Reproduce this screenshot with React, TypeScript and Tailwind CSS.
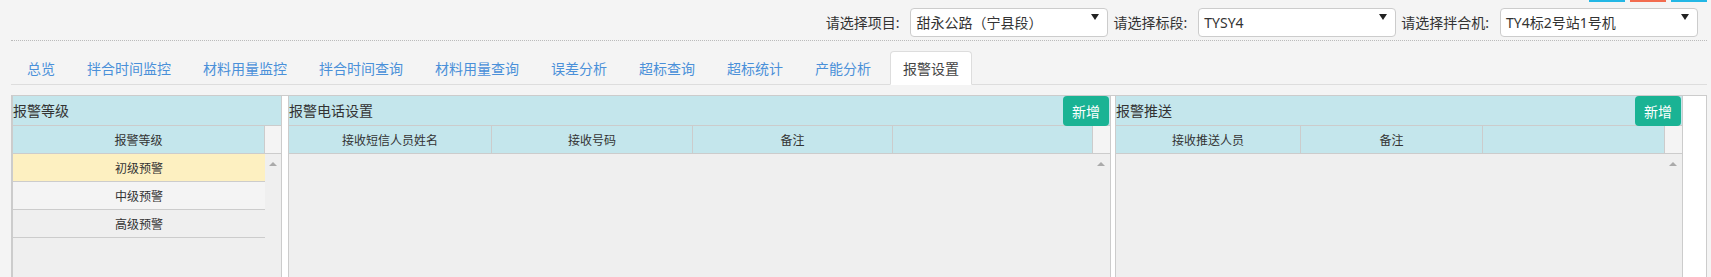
import clsx from "clsx";

const tabs = ["总览", "拌合时间监控", "材料用量监控", "拌合时间查询", "材料用量查询", "误差分析", "超标查询", "超标统计", "产能分析", "报警设置"];

const filters = [
	{ label: "请选择项目:", value: "甜永公路（宁县段）" },
	{ label: "请选择标段:", value: "TYSY4" },
	{ label: "请选择拌合机:", value: "TY4标2号站1号机" },
];

function FakeSelect({ value }: { value: string }) {
	return (
		<div className="relative flex h-[29px] w-[198px] items-center rounded-[4px] border border-[#ccc] bg-white pl-[5px] text-[14px] text-[#333]">
			{value}
			<span className="absolute right-[8px] top-[5px] h-0 w-0 border-x-[4px] border-t-[6px] border-x-transparent border-t-[#222]" />
		</div>
	);
}

function ScrollUp() {
	return <span className="mt-[8px] h-0 w-0 border-x-[4px] border-b-[4px] border-x-transparent border-b-[#aaa]" />;
}

type Column = { title: string; width: string };

function Panel({
	title,
	columns,
	className,
	withAdd,
	rows,
}: {
	title: string;
	columns: Column[];
	className: string;
	withAdd?: boolean;
	rows?: string[];
}) {
	return (
		<div className={clsx("flex flex-col border-x border-b border-[#ccc] bg-[#efefef]", className)}>
			<div className="flex h-[30px] items-center justify-between border-b border-[#ccc] bg-[#c4e6ec] text-[14px] text-[#333]">
				<span className="leading-none">{title}</span>
				{withAdd ? (
					<button className="mr-[1px] h-[30px] w-[46px] self-start rounded-[4px] bg-[#1ab394] text-[14px] text-white">
						新增
					</button>
				) : null}
			</div>
			<div className="flex h-[28px] border-b border-[#ccc] bg-[#c4e6ec] text-[12px] text-[#333]">
				{columns.map((col, i) => (
					<div key={i} className={clsx("flex items-center justify-center border-r border-[#ccc] pt-[2px]", col.width)}>
						{col.title}
					</div>
				))}
				<div className="flex-1 bg-[#f4f4f4]" />
			</div>
			<div className="flex flex-1">
				<div className={clsx("flex flex-col", rows ? columns[0].width : "flex-1")}>
					{rows?.map((row, i) => (
						<div
							key={row}
							className={clsx(
								"flex h-[28px] items-center justify-center border-b border-[#ccc] pt-[2px] text-[12px] text-[#333]",
								i === 0 && "bg-[#fdf0c1]",
								i === 1 && "bg-[#f4f4f4]",
							)}
						>
							{row}
						</div>
					))}
				</div>
				<div className={clsx("flex flex-col items-center", rows ? "flex-1" : "w-[18px]")}>
					<ScrollUp />
				</div>
			</div>
		</div>
	);
}

export default function App() {
	return (
		<div className="min-h-screen bg-[#f4f4f4] font-['Noto_Sans','Noto_Sans_CJK_SC',sans-serif]">
			<div className="pl-[11px] pr-[4px]">
				<div className="flex h-[2px] justify-end gap-[5px]">
					<div className="w-[36px] bg-[#23b7e5]" />
					<div className="w-[36px] bg-[#f26c4f]" />
					<div className="w-[36px] bg-[#23b7e5]" />
				</div>

				<div className="border-b border-dotted border-[#bbb] pb-[3px] pt-[6px]">
					<div className="flex h-[29px] items-center justify-end pr-[9px]">
						{filters.map((f, i) => (
							<div key={f.label} className={clsx("flex items-center", i < filters.length - 1 && "mr-[5px]")}>
								<span className="mr-[11px] text-[14px] text-[#333]">{f.label}</span>
								<FakeSelect value={f.value} />
							</div>
						))}
					</div>
				</div>

				<div className="pt-[10px]">
					<ul className="flex border-b border-[#ddd] pl-[3px]">
						{tabs.map((tab) => {
							const active = tab === "报警设置";
							return (
								<li
									key={tab}
									className={clsx(
										"-mb-px mr-[6px] flex h-[34px] items-center rounded-t-[4px] border px-[12px] text-[14px]",
										active ? "border-[#ddd] border-b-white bg-white text-[#444]" : "border-transparent text-[#4a90d9]",
									)}
								>
									{tab}
								</li>
							);
						})}
					</ul>
				</div>

				<div className="mt-[10px] flex h-[200px] border border-[#ccc] bg-white">
					<Panel
						title="报警等级"
						className="w-[270px]"
						columns={[{ title: "报警等级", width: "w-[252px]" }]}
						rows={["初级预警", "中级预警", "高级预警"]}
					/>
					<Panel
						title="报警电话设置"
						className="ml-[6px] w-[823px]"
						withAdd
						columns={[
							{ title: "接收短信人员姓名", width: "w-[203px]" },
							{ title: "接收号码", width: "w-[201px]" },
							{ title: "备注", width: "w-[200px]" },
							{ title: "", width: "w-[200px]" },
						]}
					/>
					<Panel
						title="报警推送"
						className="ml-[4px] w-[568px]"
						withAdd
						columns={[
							{ title: "接收推送人员", width: "w-[185px]" },
							{ title: "备注", width: "w-[182px]" },
							{ title: "", width: "w-[182px]" },
						]}
					/>
				</div>
			</div>
		</div>
	);
}
